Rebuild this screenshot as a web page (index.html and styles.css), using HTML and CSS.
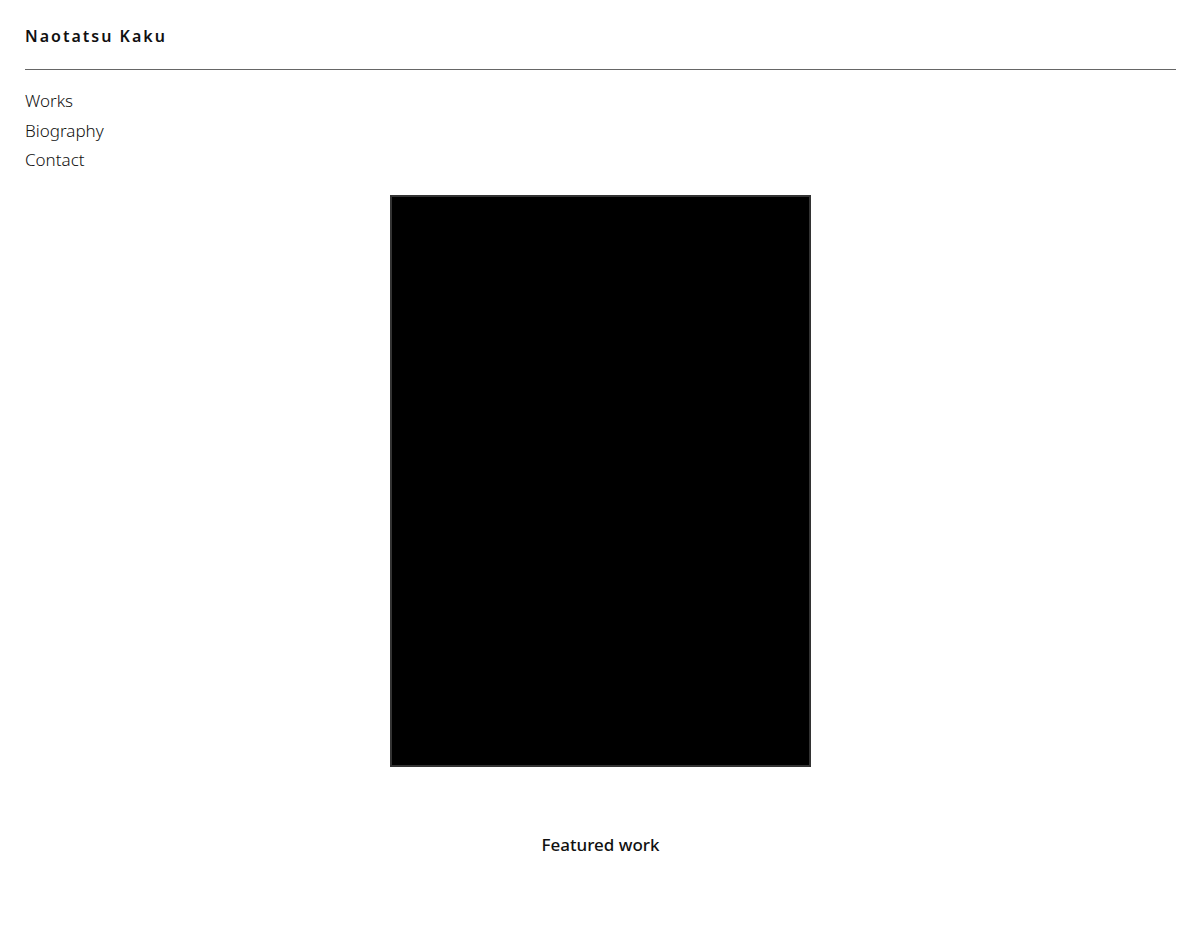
FILE: index.html
```html
<!DOCTYPE html>
<html lang="en">
<head>
<meta charset="utf-8">
<title>Naotatsu Kaku</title>
<link rel="stylesheet" href="styles.css">
</head>
<body>
<header class="site-header">
  <h1 class="site-title">Naotatsu Kaku</h1>
</header>
<nav class="site-nav">
  <a href="#">Works</a>
  <a href="#">Biography</a>
  <a href="#">Contact</a>
</nav>
<main class="featured">
  <div class="artwork"></div>
  <p class="caption">Featured work</p>
</main>
</body>
</html>
```
FILE: styles.css
```css
html, body {
  margin: 0;
  padding: 0;
  background: #fff;
}
body {
  font-family: "Noto Sans", "Open Sans", sans-serif;
  color: #111;
  padding: 0 24px 0 25px;
}
.site-header {
  height: 69px;
  border-bottom: 1px solid #666;
  display: flex;
  align-items: center;
}
.site-title {
  margin: 0;
  font-size: 16px;
  font-weight: 600;
  letter-spacing: 2px;
  position: relative;
  top: 1px;
}
.site-nav {
  display: flex;
  flex-direction: column;
  padding-top: 16px;
}
.site-nav a {
  color: #111;
  text-decoration: none;
  font-size: 17px;
  font-weight: 300;
  line-height: 29.5px;
}
.featured {
  display: flex;
  flex-direction: column;
  align-items: center;
  padding-top: 20px;
}
.artwork {
  width: 417px;
  height: 568px;
  background: #000;
  border: 2px solid #333;
}
.caption {
  margin: 66px 0 0;
  font-size: 17px;
  font-weight: 500;
}
```
